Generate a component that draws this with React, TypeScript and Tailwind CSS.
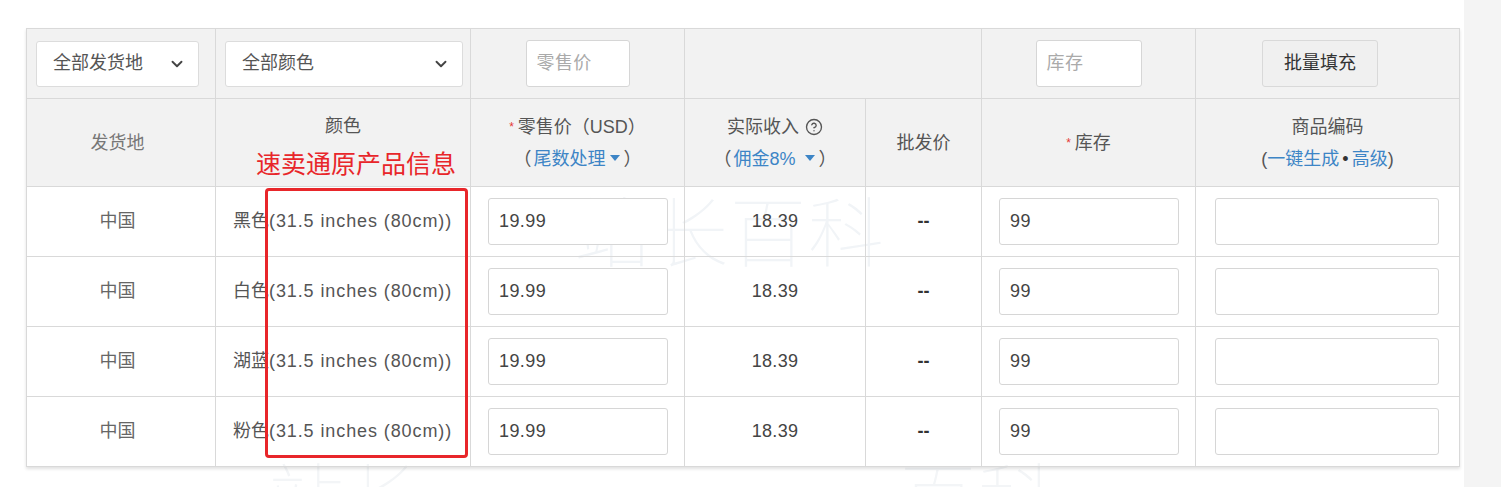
import { ChevronDown, CircleHelp } from "lucide-react";

const rows = ["黑色", "白色", "湖蓝", "粉色"];

const font = "font-['Liberation_Sans','Noto_Sans_CJK_SC',sans-serif]";

const Caret = () => (
  <span className="inline-block w-0 h-0 border-x-[5px] border-x-transparent border-t-[6px] border-t-[#3d85c6] align-middle ml-1 mb-[3px]" />
);

const Select = ({ label, width }: { label: string; width: string }) => (
  <div
    className={`${width} h-[46px] bg-white border border-[#dcdcdc] rounded-[3px] flex items-center justify-between pl-4 pr-3 text-[18px] text-[#555]`}
  >
    <span>{label}</span>
    <ChevronDown className="w-[18px] h-[18px] text-[#444]" strokeWidth={2.5} />
  </div>
);

const Field = ({ value, placeholder, width }: { value?: string; placeholder?: string; width: string }) => (
  <div
    className={`${width} h-[47px] bg-white border border-[#d6d6d6] rounded-[3px] flex items-center px-[10px] text-[18px] tracking-[0.4px] ${value ? "text-[#444]" : "text-[#aaa]"}`}
  >
    {value ?? placeholder}
  </div>
);

const cell = "border border-[#d9d9d9] p-0";

export default function App() {
  return (
    <div className={`w-[1501px] h-[487px] bg-white relative overflow-hidden ${font}`}>
      {/* watermark */}
      <div className="absolute left-[574px] top-[190px] text-[76px] leading-none tracking-[2px] font-thin text-[#f1f4f7] select-none font-['Noto_Sans_CJK_SC',sans-serif]">
        站长百科
      </div>
      <div className="absolute left-[268px] top-[456px] text-[76px] leading-none tracking-[2px] font-thin text-[#f3f5f7] select-none font-['Noto_Sans_CJK_SC',sans-serif]">
        站长
      </div>
      <div className="absolute left-[900px] top-[456px] text-[76px] leading-none tracking-[2px] font-thin text-[#f3f5f7] select-none font-['Noto_Sans_CJK_SC',sans-serif]">
        百科
      </div>

      {/* scrollbar strip */}
      <div className="absolute right-0 top-0 w-[37px] h-full bg-[#f4f4f4]" />

      <div className="pt-[28px] pl-[26px] relative">
        <table className="border-collapse table-fixed w-[1433px] border border-[#cfcfcf] shadow-[0_2px_3px_rgba(0,0,0,0.12)] relative">
          <colgroup>
            <col className="w-[189px]" />
            <col className="w-[255px]" />
            <col className="w-[214px]" />
            <col className="w-[181px]" />
            <col className="w-[116px]" />
            <col className="w-[214px]" />
            <col className="w-[264px]" />
          </colgroup>
          <tbody>
            <tr className="h-[70px] bg-[#f2f2f2]">
              <td className={`${cell} pl-[9px]`}>
                <Select label="全部发货地" width="w-[163px]" />
              </td>
              <td className={`${cell} pl-[9px]`}>
                <Select label="全部颜色" width="w-[238px]" />
              </td>
              <td className={cell}>
                <div className="flex justify-center">
                  <Field placeholder="零售价" width="w-[104px]" />
                </div>
              </td>
              <td className={cell} colSpan={2} />
              <td className={cell}>
                <div className="flex justify-center">
                  <Field placeholder="库存" width="w-[106px]" />
                </div>
              </td>
              <td className={`${cell} pl-[66px]`}>
                <button className="w-[116px] h-[47px] bg-[#f0f0f0] border border-[#d9d9d9] rounded-[3px] text-[18px] text-[#333]">
                  批量填充
                </button>
              </td>
            </tr>
            <tr className="h-[88px] bg-[#f2f2f2] text-[18px] text-[#555] text-center leading-[32px]">
              <td className={`${cell} pr-[7px] text-[#777]`}>发货地</td>
              <td className={cell}>
                <div className="-mt-[2px]">颜色</div>
                <div className="h-[32px]" />
              </td>
              <td className={cell}>
                <div>
                  <span className="text-[#e53935] text-[12px] align-top mr-1">*</span>零售价（USD）
                </div>
                <div>
                  （<span className="text-[#3d85c6] ml-[2px]">尾数处理</span>
                  <Caret />
                  <span className="ml-[4px]">）</span>
                </div>
              </td>
              <td className={cell}>
                <div className="flex items-center justify-center gap-[6px]">
                  实际收入
                  <CircleHelp className="w-[18px] h-[18px] text-[#555]" strokeWidth={1.8} />
                </div>
                <div>
                  （<span className="text-[#3d85c6] ml-[2px]">佣金8%</span> <Caret />
                  <span className="ml-[4px]">）</span>
                </div>
              </td>
              <td className={cell}>批发价</td>
              <td className={cell}>
                <span className="text-[#e53935] text-[12px] align-top mr-1">*</span>库存
              </td>
              <td className={cell}>
                <div>商品编码</div>
                <div>
                  (<span className="text-[#3d85c6]">一键生成</span>
                  <span className="mx-[3px] text-[#333]">•</span>
                  <span className="text-[#3d85c6]">高级</span>)
                </div>
              </td>
            </tr>
            {rows.map((color) => (
              <tr key={color} className="h-[70px] text-[18px] text-[#555]">
                <td className={`${cell} pr-[7px] text-center text-[#666]`}>中国</td>
                <td className={`${cell} pl-[17px] text-[#555]`}>
                  {color}
                  <span className="tracking-[0.9px]">(31.5 inches (80cm))</span>
                </td>
                <td className={`${cell} pl-[17px]`}>
                  <Field value="19.99" width="w-[180px]" />
                </td>
                <td className={`${cell} text-center text-[#444] tracking-[0.3px]`}>18.39</td>
                <td className={`${cell} text-center text-[#333] font-bold`}>--</td>
                <td className={`${cell} pl-[17px]`}>
                  <Field value="99" width="w-[180px]" />
                </td>
                <td className={`${cell} pl-[19px]`}>
                  <Field width="w-[224px]" />
                </td>
              </tr>
            ))}
          </tbody>
        </table>
      </div>

      {/* annotation */}
      <div className="absolute left-[256px] top-[144px] text-[25px] leading-[36px] text-[#e8262a] font-['Noto_Sans_CJK_SC',sans-serif]">
        速卖通原产品信息
      </div>
      <div className="absolute left-[265px] top-[188px] w-[203px] h-[270px] border-[3px] border-[#e8262a] rounded-[4px]" />
    </div>
  );
}
